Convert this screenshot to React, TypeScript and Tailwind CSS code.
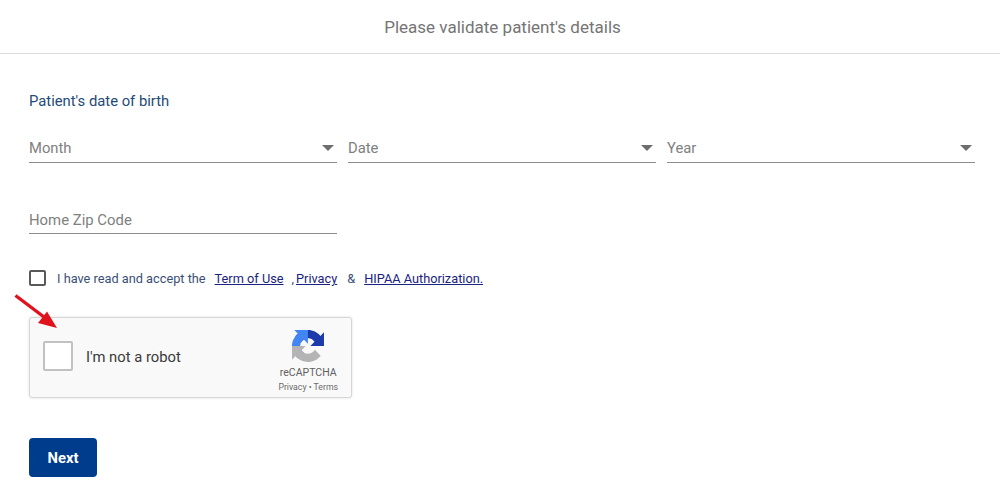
import React from 'react';

const SelectField = ({ label }: { label: string }) => (
  <div className="flex-1 h-[32px] pt-[3px] border-b border-[#8c8c8c] flex items-center justify-between pr-[3px]">
    <span className="text-[14.8px] text-[#808080]">{label}</span>
    <span className="w-0 h-0 border-x-[6px] border-x-transparent border-t-[6px] border-t-[#6e6e6e]"></span>
  </div>
);

const RecaptchaLogo = () => (
  <svg width="32" height="32" viewBox="0 0 64 64">
    <path
      d="M64 31.955l-.033-1.37V4.687l-7.16 7.16C50.948 4.674 42.033.093 32.05.093c-10.4 0-19.622 4.96-25.458 12.64l11.736 11.86a15.55 15.55 0 0 1 4.754-5.334c2.05-1.6 4.952-2.906 8.968-2.906.485 0 .86.057 1.135.163 4.976.393 9.288 3.14 11.828 7.124l-8.307 8.307L64 31.953"
      fill="#1c3aa9"
    />
    <path
      d="M31.862.094l-1.37.033H4.594l7.16 7.16C4.58 13.147 0 22.06 0 32.046c0 10.4 4.96 19.622 12.64 25.458L24.5 45.768a15.55 15.55 0 0 1-5.334-4.754c-1.6-2.05-2.906-4.952-2.906-8.968 0-.485.057-.86.163-1.135.393-4.976 3.14-9.288 7.124-11.828l8.307 8.307L31.86.094"
      fill="#4285f4"
    />
    <path
      d="M.001 32.045l.033 1.37v25.898l7.16-7.16c5.86 7.173 14.774 11.754 24.76 11.754 10.4 0 19.622-4.96 25.458-12.64l-11.736-11.86a15.55 15.55 0 0 1-4.754 5.334c-2.05 1.6-4.952 2.906-8.968 2.906-.485 0-.86-.057-1.135-.163-4.976-.393-9.288-3.14-11.828-7.124l8.307-8.307c-10.522.001-22.4.03-29.295-.005"
      fill="#b4b4b4"
    />
  </svg>
);

export default function App() {
  return (
    <div className="relative w-[1000px] h-[498px] overflow-hidden bg-white font-['Roboto',sans-serif]">
      <div className="h-[54px] pt-[3px] pl-[5px] border-b border-[#dcdcdc] flex items-center justify-center text-[17px] text-[#757575]">
        Please validate patient's details
      </div>

      <div className="pl-[29px] pr-[25px] pt-[37px]">
        <div className="text-[14.8px] leading-5 text-[#234a78]">Patient's date of birth</div>

        <div className="flex gap-[11px] mt-[20px]">
          <SelectField label="Month" />
          <SelectField label="Date" />
          <SelectField label="Year" />
        </div>

        <div className="w-[308px] h-[34px] pt-[8px] mt-[37px] border-b border-[#8c8c8c] flex items-center text-[14.9px] text-[#808080]">
          Home Zip Code
        </div>

        <div className="flex items-center h-[16px] mt-[36px] text-[12.75px] text-[#3a4f78]">
          <span className="w-[17px] h-[16px] border-2 border-[#5a5a5a] rounded-[2px]"></span>
          <div className="flex items-center pt-[2px]">
            <span className="ml-[11px]">I have read and accept the</span>
            <a className="ml-[9px] text-[#1a237e] underline">Term of Use</a>
            <span className="ml-[8px]">,</span>
            <a className="ml-[2px] text-[#1a237e] underline">Privacy</a>
            <span className="ml-[10px]">&amp;</span>
            <a className="ml-[9px] text-[#1a237e] underline">HIPAA Authorization.</a>
          </div>
        </div>

        <div className="w-[323px] h-[81px] mt-[31px] bg-[#f9f9f9] border border-[#d6d6d6] rounded-[3px] shadow-[0_0_3px_rgba(0,0,0,0.12)] flex items-center pl-[13px] pr-[13px]">
          <span className="w-[30px] h-[30px] -mt-[4px] bg-white border-2 border-[#c1c1c1] rounded-[2px]"></span>
          <span className="ml-[13px] text-[14.8px] text-[#3a3a3a]">I'm not a robot</span>
          <div className="ml-auto mt-[7px] flex flex-col items-center">
            <RecaptchaLogo />
            <span className="mt-[4px] text-[10.5px] leading-[13px] text-[#606060]">reCAPTCHA</span>
            <span className="mt-[3px] text-[8.7px] leading-[11px] text-[#6a6a6a]">Privacy • Terms</span>
          </div>
        </div>

        <button className="block w-[68px] h-[39px] pt-[1px] mt-[40px] bg-[#003c8c] rounded-[4px] text-white text-[14.8px] font-bold">
          Next
        </button>
      </div>

      <svg className="absolute left-[14px] top-[293px]" width="46" height="38" viewBox="0 0 46 38">
        <path d="M1.5 2.5 L30 24" stroke="#e0121c" strokeWidth="3.4" fill="none" />
        <path d="M43 35 L24 30 L33 18.5 Z" fill="#e0121c" />
      </svg>
    </div>
  );
}
